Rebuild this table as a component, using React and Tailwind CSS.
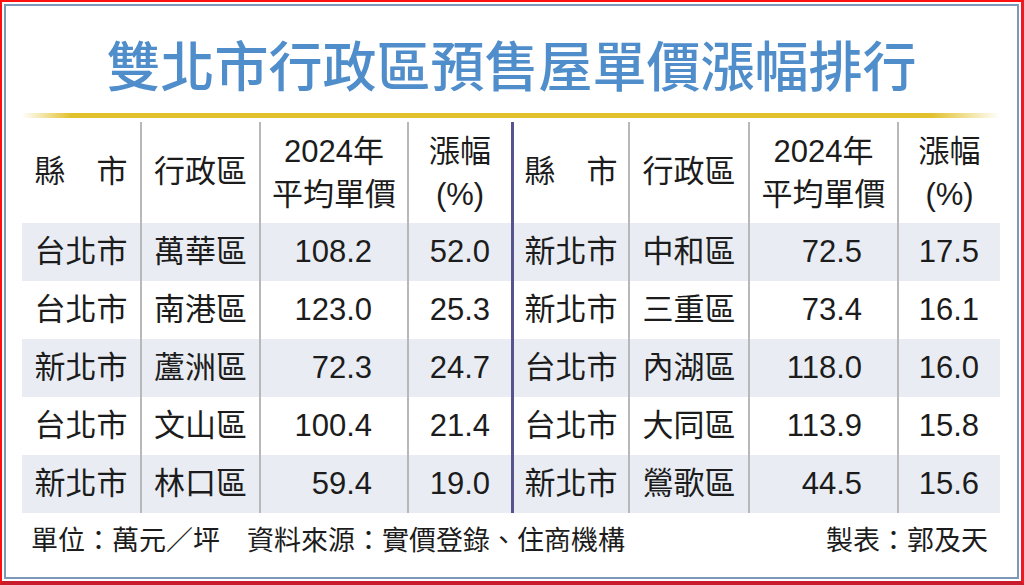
// 雙北市行政區預售屋單價漲幅排行 — 新聞圖表表格
const left = [
  ['台北市', '萬華區', '108.2', '52.0'],
  ['台北市', '南港區', '123.0', '25.3'],
  ['新北市', '蘆洲區', '72.3', '24.7'],
  ['台北市', '文山區', '100.4', '21.4'],
  ['新北市', '林口區', '59.4', '19.0'],
];

const right = [
  ['新北市', '中和區', '72.5', '17.5'],
  ['新北市', '三重區', '73.4', '16.1'],
  ['台北市', '內湖區', '118.0', '16.0'],
  ['台北市', '大同區', '113.9', '15.8'],
  ['新北市', '鶯歌區', '44.5', '15.6'],
];

const grid =
  'grid grid-cols-[118px_119px_148px_104px_3px_114px_120px_149px_103px]';
const sep = 'border-l-2 border-[#b8b8b8]';

function HeaderHalf() {
  return (
    <>
      <div className="flex items-center justify-center">縣　市</div>
      <div className={`${sep} flex items-center justify-center`}>行政區</div>
      <div className={`${sep} flex flex-col items-center justify-center leading-[43px]`}>
        <span>2024年</span>
        <span>平均單價</span>
      </div>
      <div className={`${sep} flex flex-col items-center justify-center leading-[43px]`}>
        <span>漲幅</span>
        <span>(%)</span>
      </div>
    </>
  );
}

function RowHalf({ row, shade }) {
  const bg = shade ? 'bg-[#e9edf3]' : '';
  return (
    <>
      <div className={`${bg} flex items-center justify-center`}>{row[0]}</div>
      <div className={`${bg} ${sep} flex items-center justify-center`}>{row[1]}</div>
      <div className={`${bg} ${sep} flex items-center justify-end pr-[35px] text-[31px]`}>{row[2]}</div>
      <div className={`${bg} ${sep} flex items-center justify-end pr-[21px] text-[31px]`}>{row[3]}</div>
    </>
  );
}

export default function App() {
  return (
    // 外框：紅色外線 + 白邊 + 藍灰內線
    <div className="w-[1024px] h-[585px] bg-white border-t-2 border-l-2 border-r-[3px] border-b-[4px] border-t-[#ff1010] border-l-[#ff1010] border-r-[#ee1a22] border-b-[#c81c2c] p-[2px]">
      <div className="h-full border-2 border-[#7d98b8] flex flex-col font-['Liberation_Sans','Noto_Sans_CJK_TC',sans-serif] text-[#1c1c1c]">

        {/* 標題 */}
        <div className="h-[107px] pt-[9px] flex items-center justify-center">
          <h1 className="text-[54px] leading-none font-medium text-[#4f8dcb] font-['Noto_Sans_CJK_TC',sans-serif]">
            雙北市行政區預售屋單價漲幅排行
          </h1>
        </div>

        {/* 金色分隔線 */}
        <div className="ml-[16px] w-[978px] h-[5px] bg-[linear-gradient(to_right,transparent,#e2c12e_5%,#e2c12e_93%,transparent)]" />

        {/* 表格 */}
        <div className="ml-[16px] w-[978px] mt-[4px] text-[31px]">
          <div className={`${grid} h-[101px]`}>
            <HeaderHalf />
            <div className="bg-[#56538e]" />
            <HeaderHalf />
          </div>

          {left.map((row, i) => (
            <div key={i} className={`${grid} h-[58px]`}>
              <RowHalf row={row} shade={i % 2 === 0} />
              <div className="bg-[#56538e]" />
              <RowHalf row={right[i]} shade={i % 2 === 0} />
            </div>
          ))}
        </div>

        {/* 註腳 */}
        <div className="h-[56px] flex items-center justify-between pl-[25px] pr-[29px] text-[27px]">
          <span>單位：萬元／坪　資料來源：實價登錄、住商機構</span>
          <span>製表：郭及天</span>
        </div>
      </div>
    </div>
  );
}
